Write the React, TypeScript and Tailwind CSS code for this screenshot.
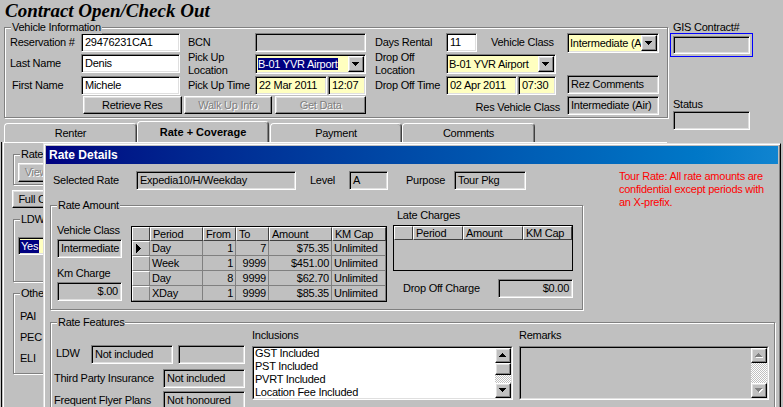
import React from "react";

const sunken =
  "border border-t-[#808080] border-l-[#808080] border-r-white border-b-white shadow-[inset_1px_1px_0_#000,inset_-1px_-1px_0_#dfdfdf]";
const raised =
  "border border-t-white border-l-white border-r-black border-b-black shadow-[inset_-1px_-1px_0_#808080,inset_1px_1px_0_#dfdfdf]";

type P = { className?: string; children?: React.ReactNode };

function Field({ className = "", children, right = false }: P & { right?: boolean }) {
  return (
    <div
      className={`${sunken} h-[19px] flex items-center overflow-hidden whitespace-nowrap ${
        right ? "justify-end pr-[3px]" : "pl-[3px]"
      } ${className}`}
    >
      {children}
    </div>
  );
}

function Lbl({ className = "", children }: P) {
  return (
    <div className={`h-[19px] flex items-center whitespace-nowrap ${className}`}>
      <span>{children}</span>
    </div>
  );
}

function Btn({ className = "", children, disabled = false }: P & { disabled?: boolean }) {
  return (
    <div
      className={`${raised} h-[18px] flex items-center justify-center whitespace-nowrap bg-[#c0c0c0] ${
        disabled ? "text-[#808080] [text-shadow:1px_1px_0_#fff]" : ""
      } ${className}`}
    >
      {children}
    </div>
  );
}

function Tri({ dir, disabled = false }: { dir: "up" | "down"; disabled?: boolean }) {
  const rows =
    dir === "up"
      ? [
          [3, 0, 1],
          [2, 1, 3],
          [1, 2, 5],
          [0, 3, 7],
        ]
      : [
          [0, 0, 7],
          [1, 1, 5],
          [2, 2, 3],
          [3, 3, 1],
        ];
  return (
    <svg width="8" height="5" shapeRendering="crispEdges">
      {disabled && (
        <g fill="#fff">
          {rows.map(([x, y, w], i) => (
            <rect key={i} x={x + 1} y={y + 1} width={w} height={1} />
          ))}
        </g>
      )}
      <g fill={disabled ? "#808080" : "#000"}>
        {rows.map(([x, y, w], i) => (
          <rect key={i} x={x} y={y} width={w} height={1} />
        ))}
      </g>
    </svg>
  );
}

function RightArrow() {
  return (
    <svg width="5" height="9" shapeRendering="crispEdges">
      <rect x="0" y="0" width="1" height="9" />
      <rect x="1" y="1" width="1" height="7" />
      <rect x="2" y="2" width="1" height="5" />
      <rect x="3" y="3" width="1" height="3" />
      <rect x="4" y="4" width="1" height="1" />
    </svg>
  );
}

function Combo({ className = "", children }: P) {
  return (
    <div className={`${sunken} h-[20px] flex items-center bg-[#ffffc0] ${className}`}>
      <div className="flex-1 min-w-0 overflow-hidden whitespace-nowrap pl-[2px]">{children}</div>
      <div
        className={`${raised} w-[16px] h-[16px] shrink-0 mr-[1px] flex items-center justify-center bg-[#c0c0c0]`}
      >
        <Tri dir="down" />
      </div>
    </div>
  );
}

function Group({ label, className = "", children }: P & { label: string }) {
  return (
    <div
      className={`relative border border-[#808080] shadow-[inset_1px_1px_0_#fff,1px_1px_0_#fff] ${className}`}
    >
      <span className="absolute left-[6px] -top-[7px] bg-[#c0c0c0] px-[1px] leading-[13px] whitespace-nowrap">
        {label}
      </span>
      {children}
    </div>
  );
}

function Tab({ label, className = "", active = false }: { label: string; className?: string; active?: boolean }) {
  return (
    <div
      className={`${className} ${
        active ? "h-[21px] font-bold tracking-normal z-10" : "h-[19px]"
      } rounded-t-[4px] border-t border-l border-r border-t-white border-l-white border-r-[#404040] shadow-[inset_-1px_0_0_#808080] flex items-center justify-center bg-[#c0c0c0]`}
    >
      {label}
    </div>
  );
}

const dither =
  "bg-[image:repeating-conic-gradient(#fff_0_25%,#c0c0c0_0_50%)] bg-[length:2px_2px]";

function ScrollBar({ disabled = false }: { disabled?: boolean }) {
  return (
    <div className="w-[16px] h-full flex flex-col shrink-0">
      <div className={`${raised} h-[15px] flex items-center justify-center bg-[#c0c0c0]`}>
        <Tri dir="up" disabled={disabled} />
      </div>
      {!disabled && <div className={`${raised} h-[12px] bg-[#c0c0c0]`} />}
      <div className={`flex-1 ${dither}`} />
      <div className={`${raised} h-[15px] flex items-center justify-center bg-[#c0c0c0]`}>
        <Tri dir="down" disabled={disabled} />
      </div>
    </div>
  );
}

function ListBox({ className = "", white = false, children, disabled = false }: P & { white?: boolean; disabled?: boolean }) {
  return (
    <div className={`border border-t-[#808080] border-l-[#808080] border-r-white border-b-white ${className}`}>
      <div
        className={`h-full border border-t-black border-l-black border-r-[#dfdfdf] border-b-[#dfdfdf] flex ${
          white ? "bg-white" : "bg-[#c0c0c0]"
        }`}
      >
        <div className="flex-1 min-w-0 pl-[1px] -mt-[1px] whitespace-nowrap overflow-hidden">{children}</div>
        <ScrollBar disabled={disabled} />
      </div>
    </div>
  );
}

const rateRows = [
  ["Day", "1", "7", "$75.35", "Unlimited"],
  ["Week", "1", "9999", "$451.00", "Unlimited"],
  ["Day", "8", "9999", "$62.70", "Unlimited"],
  ["XDay", "1", "9999", "$85.35", "Unlimited"],
];

const hdr =
  "h-[14px] border border-t-white border-l-white border-r-[#404040] border-b-[#404040] flex items-center pl-[2px] whitespace-nowrap overflow-hidden";
const rowHdr =
  "h-[15px] border border-t-white border-l-white border-r-[#808080] border-b-[#808080] flex items-center pl-[3px]";
const cell = "h-[15px] border-r border-b border-[#808080] flex items-center whitespace-nowrap overflow-hidden";

export default function App() {
  return (
    <div className="relative w-[783px] h-[407px] overflow-hidden bg-[#c0c0c0] text-black text-[11px] leading-[13px] tracking-[-0.25px] font-['Liberation_Sans',Arial,sans-serif]">
      <div className="h-[21px] pl-[5px] font-['Liberation_Serif','Times_New_Roman',serif] text-[19px] leading-[21px] font-bold italic tracking-normal">
        Contract Open/Check Out
      </div>

      <div className="flex">
        <div className="w-[668px] shrink-0">
          <Group label="Vehicle Information" className="ml-[4px] mt-[6px] w-[664px] h-[91px] pl-[5px] pt-[5px]">
            <div className="grid grid-cols-[71px_99px_75px_111px_80px_110px_103px] grid-rows-[21px_22px_20px_18px] items-start">
              <Lbl>Reservation #</Lbl>
              <Field className="w-[99px] bg-white">29476231CA1</Field>
              <Lbl className="pl-[8px]">BCN</Lbl>
              <Field className="w-[111px]" />
              <Lbl className="pl-[9px]">Days Rental</Lbl>
              <div className="flex items-center h-[19px]">
                <Field className="w-[31px] bg-white">11</Field>
                <span className="ml-[14px] whitespace-nowrap">Vehicle Class</span>
              </div>
              <div className="pl-[11px]">
                <Combo className="w-[92px]">Intermediate (A</Combo>
              </div>

              <Lbl>Last Name</Lbl>
              <Field className="w-[99px] bg-white">Denis</Field>
              <Lbl className="pl-[8px] h-[20px]">
                Pick Up
                <br />
                Location
              </Lbl>
              <Combo className="w-[111px]">
                <span className="bg-[#000080] text-white">B-01 YVR Airport</span>
              </Combo>
              <Lbl className="pl-[9px] h-[20px]">
                Drop Off
                <br />
                Location
              </Lbl>
              <Combo className="w-[110px]">B-01 YVR Airport</Combo>
              <div />

              <Lbl className="pl-[2px]">First Name</Lbl>
              <Field className="w-[99px] bg-white">Michele</Field>
              <Lbl className="pl-[8px]">Pick Up Time</Lbl>
              <div className="flex gap-[1px]">
                <Field className="w-[72px] bg-[#ffffc0]">22 Mar 2011</Field>
                <Field className="w-[38px] bg-[#ffffc0]">12:07</Field>
              </div>
              <Lbl className="pl-[9px]">Drop Off Time</Lbl>
              <div className="flex gap-[1px]">
                <Field className="w-[71px] bg-[#ffffc0]">02 Apr 2011</Field>
                <Field className="w-[38px] bg-[#ffffc0]">07:30</Field>
              </div>
              <div className="pl-[11px] -mt-[1px]">
                <Field className="w-[92px]">Rez Comments</Field>
              </div>

              <div />
              <div className="col-span-3 flex">
                <Btn className="ml-[2px] w-[99px]">Retrieve Res</Btn>
                <Btn className="ml-[2px] w-[89px]" disabled>
                  Walk Up Info
                </Btn>
                <Btn className="ml-[3px] w-[91px]" disabled>
                  Get Data
                </Btn>
              </div>
              <div className="col-span-2 flex justify-end items-center h-[22px] -mr-[4px] whitespace-nowrap">
                Res Vehicle Class
              </div>
              <div className="pl-[11px]">
                <Field className="w-[92px] h-[18px]">Intermediate (Air)</Field>
              </div>
            </div>
          </Group>

          <div className="flex items-end ml-[4px] mt-[3px] h-[21px]">
            <Tab label="Renter" className="w-[133px]" />
            <Tab label="Rate + Coverage" className="w-[132px]" active />
            <Tab label="Payment" className="w-[132px] ml-[1px]" />
            <Tab label="Comments" className="w-[133px]" />
          </div>

          <div className="ml-[1px] border-l border-black h-[270px]">
            <div className="ml-[1px] w-[664px] h-full border-l border-t border-white">
              <div className="w-[40px] h-full overflow-hidden pl-[9px] pt-[11px]">
                <Group label="Rate" className="w-[220px] h-[31px] pl-[4px] pt-[8px]">
                  <Btn disabled className="w-[36px] h-[19px]">
                    View
                  </Btn>
                </Group>
                <Btn className="mt-[5px] -ml-[1px] w-[78px] h-[18px]">Full Coverage</Btn>
                <Group label="LDW" className="mt-[11px] w-[220px] h-[63px] pl-[4px] pt-[17px]">
                  <div className={`${sunken} w-[80px] h-[18px] bg-[#ffffc0] flex items-center pl-[1px]`}>
                    <span className="bg-[#000080] text-white px-[1px]">Yes</span>
                  </div>
                </Group>
                <Group label="Other Coverage" className="mt-[11px] w-[220px] h-[81px] pl-[6px] pt-[12px] leading-[21px]">
                  <div>PAI</div>
                  <div>PEC</div>
                  <div>ELI</div>
                </Group>
              </div>
            </div>
          </div>
        </div>

        <div className="flex flex-col">
          <div className="ml-[5px] h-[12px] leading-[12px] whitespace-nowrap">GIS Contract#</div>
          <div className="ml-[2px] w-[83px] h-[24px] border border-[#0000ff] p-[2px]">
            <Field className="w-full h-full" />
          </div>
          <div className="ml-[5px] mt-[41px] h-[13px]">Status</div>
          <Field className="ml-[5px] w-[77px] h-[18px]" />
        </div>
      </div>

      {/* Rate Details dialog */}
      <div className="absolute left-[43px] top-[143px] w-[738px] h-[270px] border border-t-[#dfdfdf] border-l-[#dfdfdf] border-r-black border-b-black shadow-[inset_1px_1px_0_#fff,inset_-1px_-1px_0_#808080] p-[2px] bg-[#c0c0c0]">
        <div className="h-[18px] bg-linear-to-r from-[#000080] to-[#1084d0] flex items-center pl-[3px] text-white font-bold text-[12px] tracking-normal">
          Rate Details
        </div>
        <div className="pl-[4px]">
          <div className="flex items-start">
            <div className="w-[533px] shrink-0 pt-[7px]">
              <div className="flex items-center h-[18px]">
                <span className="ml-[3px] w-[83px] whitespace-nowrap">Selected Rate</span>
                <Field className="w-[160px] h-[18px]">Expedia10/H/Weekday</Field>
                <span className="ml-[14px] w-[39px]">Level</span>
                <Field className="w-[39px] h-[18px]">A</Field>
                <span className="ml-[18px] w-[48px]">Purpose</span>
                <Field className="w-[72px] h-[18px]">Tour Pkg</Field>
              </div>

              <Group label="Rate Amount" className="mt-[16px] w-[533px] h-[105px]">
                <div className="flex items-start pl-[6px]">
                  <div className="w-[65px] mt-[18px]">
                    <div className="whitespace-nowrap">Vehicle Class</div>
                    <Field className="mt-[2px] w-[65px] h-[18px]">Intermediate</Field>
                    <div className="mt-[9px] whitespace-nowrap">Km Charge</div>
                    <Field className="mt-[2px] w-[65px] h-[18px]" right>
                      $.00
                    </Field>
                  </div>

                  <div className="ml-[9px] mt-[20px] w-[256px] border border-black grid grid-cols-[18px_53px_33px_33px_63px_54px]">
                    <div className={hdr} />
                    <div className={hdr}>Period</div>
                    <div className={hdr}>From</div>
                    <div className={hdr}>To</div>
                    <div className={hdr}>Amount</div>
                    <div className={hdr}>KM Cap</div>
                    {rateRows.map((r, i) => (
                      <React.Fragment key={i}>
                        <div className={rowHdr}>{i === 0 && <RightArrow />}</div>
                        <div className={`${cell} pl-[2px]`}>{r[0]}</div>
                        <div className={`${cell} justify-end pr-[2px]`}>{r[1]}</div>
                        <div className={`${cell} justify-end pr-[2px]`}>{r[2]}</div>
                        <div className={`${cell} justify-end pr-[2px]`}>{r[3]}</div>
                        <div className={`${cell} pl-[2px]`}>{r[4]}</div>
                      </React.Fragment>
                    ))}
                  </div>

                  <div className="ml-[6px] mt-[3px] w-[180px]">
                    <div className="pl-[4px] whitespace-nowrap">Late Charges</div>
                    <div className="mt-[3px] w-[180px] h-[46px] border border-black">
                      <div className="grid grid-cols-[19px_50px_60px_49px]">
                        <div className={hdr} />
                        <div className={hdr}>Period</div>
                        <div className={hdr}>Amount</div>
                        <div className={hdr}>KM Cap</div>
                      </div>
                    </div>
                    <div className="mt-[8px] flex items-center h-[18px]">
                      <span className="pl-[10px] whitespace-nowrap">Drop Off Charge</span>
                      <Field className="ml-auto w-[75px] h-[18px]" right>
                        $0.00
                      </Field>
                    </div>
                  </div>
                </div>
              </Group>
            </div>
            <div className="ml-[36px] mt-[6px] text-[#ff0000] whitespace-nowrap">
              Tour Rate: All rate amounts are
              <br />
              confidential except periods with
              <br />
              an X-prefix.
            </div>
          </div>

          <Group label="Rate Features" className="mt-[12px] w-[725px] h-[100px]">
            <div className="flex items-start pl-[3px]">
              <div className="w-[191px] mt-[22px]">
                <div className="flex items-center h-[18px]">
                  <span className="pl-[2px] w-[37px] -mt-[2px]">LDW</span>
                  <Field className="w-[82px] h-[18px]">Not included</Field>
                  <Field className="ml-[5px] w-[67px] h-[18px]" />
                </div>
                <div className="mt-[6px] flex items-center h-[18px]">
                  <span className="w-[109px] whitespace-nowrap">Third Party Insurance</span>
                  <Field className="w-[82px] h-[18px]">Not included</Field>
                </div>
                <div className="mt-[4px] flex items-center h-[18px]">
                  <span className="w-[109px] whitespace-nowrap">Frequent Flyer Plans</span>
                  <Field className="w-[82px] h-[18px]">Not honoured</Field>
                </div>
              </div>
              <div className="ml-[7px] w-[261px] mt-[6px]">
                <div>Inclusions</div>
                <ListBox white className="mt-[4px] w-[261px] h-[54px]">
                  <div>GST Included</div>
                  <div>PST Included</div>
                  <div>PVRT Included</div>
                  <div>Location Fee Included</div>
                </ListBox>
              </div>
              <div className="ml-[6px] w-[250px] mt-[6px]">
                <div>Remarks</div>
                <ListBox disabled className="mt-[4px] w-[250px] h-[54px]" />
              </div>
            </div>
          </Group>
        </div>
      </div>
    </div>
  );
}
